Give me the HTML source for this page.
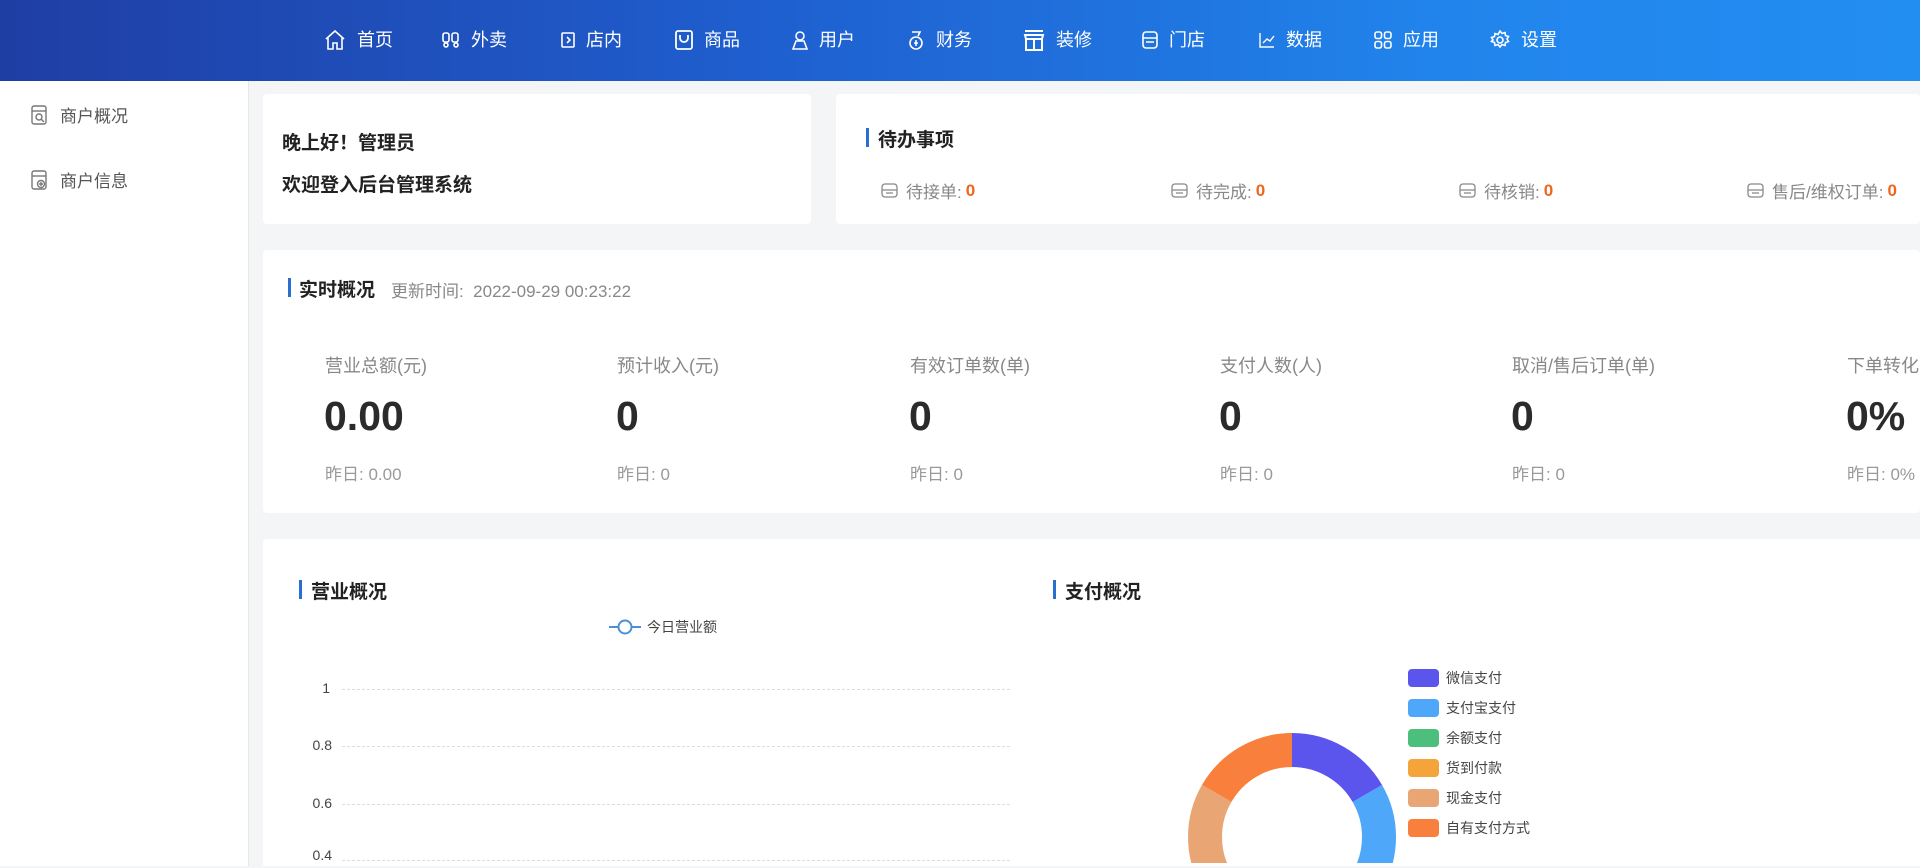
<!DOCTYPE html>
<html><head><meta charset="utf-8"><style>
*{margin:0;padding:0;box-sizing:border-box}
html,body{width:1920px;height:868px;overflow:hidden}
body{background:#f4f5f7;font-family:"Liberation Sans","Noto Sans CJK SC",sans-serif;color:#333}
#w{position:relative;width:1920px;height:868px;overflow:hidden}
.a{position:absolute;white-space:nowrap}
.hdr{position:absolute;left:0;top:0;width:1920px;height:81px;background:linear-gradient(90deg,#1f3ea4 0%,#1f5fcf 40%,#2184ec 75%,#238ef2 100%)}
.nav{position:absolute;top:28px;color:#fff;font-size:18px;line-height:24px;display:flex;align-items:center}
.nav svg{margin-right:10px}
.side{position:absolute;left:0;top:81px;width:249px;height:785px;background:#fff;border-right:1px solid #e8e8e8}
.sideb{position:absolute;left:0;top:866px;width:249px;height:2px;background:#fff;border-right:1px solid #e8e8e8}
.si{position:absolute;left:30px;font-size:17px;color:#555;display:flex;align-items:center}
.si svg{margin-right:12px}
.card{position:absolute;background:#fff;border-radius:4px}
.t{font-weight:bold;font-size:19px;color:#222}
.bar{position:absolute;width:3px;height:19px;background:#2a6fd0}
.todo{position:absolute;top:178px;font-size:17px;color:#888;display:flex;align-items:center}
.todo svg{margin-right:7px}
.todo b{color:#f0641e;margin-left:4px}
.lbl{font-size:18px;color:#888;top:352px}
.val{font-size:41px;font-weight:bold;color:#2b2b2b;top:393px}
.yd{font-size:17px;color:#999;top:460px}
.yl{font-size:14px;line-height:16px;color:#444;text-align:right;width:30px}
.gl{position:absolute;left:79px;width:668px;border-top:1px dashed #ddd}
.lg{position:absolute;left:1145px;width:31px;height:18px;border-radius:4px}
.lt{position:absolute;left:1183px;font-size:14px;color:#444}
</style></head><body><div id="w">
<div class="hdr"></div>
<div class="nav" style="left:323px"><svg width="24" height="24" viewBox="0 0 24 24" fill="none" stroke="#fff" stroke-width="1.6"><path d="M3 11L12 3l9 8M5 10v11h5v-6h4v6h5V10"/></svg>首页</div>
<div class="nav" style="left:441px"><svg width="20" height="20" viewBox="0 0 20 20" fill="none" stroke="#fff" stroke-width="1.6"><rect x="2" y="3" width="6" height="9" rx="2"/><rect x="11" y="3" width="6" height="9" rx="2"/><circle cx="5" cy="15" r="2"/><circle cx="15" cy="15" r="2"/></svg>外卖</div>
<div class="nav" style="left:560px"><svg width="16" height="18" viewBox="0 0 16 18" fill="none" stroke="#fff" stroke-width="1.6"><rect x="2" y="2" width="12" height="14" rx="1"/><path d="M7 6l3 3-3 3"/></svg>店内</div>
<div class="nav" style="left:674px"><svg width="20" height="22" viewBox="0 0 20 22" fill="none" stroke="#fff" stroke-width="1.8"><rect x="2" y="2" width="16" height="18" rx="2"/><path d="M6 6v3a4 4 0 0 0 8 0V6"/></svg>商品</div>
<div class="nav" style="left:791px"><svg width="18" height="22" viewBox="0 0 18 22" fill="none" stroke="#fff" stroke-width="1.6"><circle cx="9" cy="7" r="4"/><path d="M2 20l3-8h8l3 8z"/></svg>用户</div>
<div class="nav" style="left:906px"><svg width="20" height="22" viewBox="0 0 20 22" fill="none" stroke="#fff" stroke-width="1.6"><path d="M6 3h8l-2 4"/><circle cx="10" cy="14" r="6"/><path d="M8 14h4M10 11v6"/></svg>财务</div>
<div class="nav" style="left:1022px"><svg width="24" height="24" viewBox="0 0 24 24" fill="none" stroke="#fff" stroke-width="2"><path d="M3 3h18M3 7h18l-1 4H4z"/><rect x="4" y="11" width="16" height="11"/><path d="M12 11v11"/></svg>装修</div>
<div class="nav" style="left:1141px"><svg width="18" height="20" viewBox="0 0 18 20" fill="none" stroke="#fff" stroke-width="1.6"><rect x="2" y="2" width="14" height="16" rx="3"/><path d="M2 8h14M5 12h8"/></svg>门店</div>
<div class="nav" style="left:1258px"><svg width="18" height="18" viewBox="0 0 18 18" fill="none" stroke="#fff" stroke-width="1.4"><path d="M2 2v14h14M5 12l4-4 3 2 4-5"/></svg>数据</div>
<div class="nav" style="left:1373px"><svg width="20" height="20" viewBox="0 0 20 20" fill="none" stroke="#fff" stroke-width="1.6"><rect x="2" y="2" width="6.5" height="6.5" rx="2"/><rect x="11.5" y="2" width="6.5" height="6.5" rx="2"/><rect x="2" y="11.5" width="6.5" height="6.5" rx="2"/><rect x="11.5" y="11.5" width="6.5" height="6.5" rx="2"/></svg>应用</div>
<div class="nav" style="left:1489px"><svg width="22" height="22" viewBox="0 0 22 22" fill="none" stroke="#fff" stroke-width="1.6"><circle cx="11" cy="11" r="3"/><path d="M11 2l2 2.5 3-1 .5 3 3 1-1.5 2.5 1.5 2.5-3 1-.5 3-3-1-2 2.5-2-2.5-3 1-.5-3-3-1L4 11 2.5 8.5l3-1 .5-3 3 1z"/></svg>设置</div>

<div class="side">
<div class="si" style="top:21px"><svg width="18" height="22" viewBox="0 0 18 22" fill="none" stroke="#777" stroke-width="1.4"><rect x="2" y="2" width="14" height="18" rx="2"/><path d="M2 7h14"/><circle cx="9" cy="13" r="3"/><path d="M11 15l3 3"/></svg>商户概况</div>
<div class="si" style="top:86px"><svg width="18" height="22" viewBox="0 0 18 22" fill="none" stroke="#777" stroke-width="1.4"><rect x="2" y="2" width="14" height="18" rx="2"/><path d="M2 7h14"/><circle cx="11" cy="15" r="3.5"/><path d="M11 13v4M9 15h4"/></svg>商户信息</div>
</div>

<div class="card" style="left:263px;top:94px;width:548px;height:130px"></div>
<div class="a t" style="left:282px;top:128px">晚上好！管理员</div>
<div class="a t" style="left:282px;top:170px">欢迎登入后台管理系统</div>

<div class="card" style="left:836px;top:94px;width:1084px;height:130px"></div>
<div class="bar" style="left:866px;top:128px"></div>
<div class="a t" style="left:878px;top:125px">待办事项</div>
<div class="todo" style="left:880px">
<svg width="19" height="19" viewBox="0 0 19 19" fill="none" stroke="#888" stroke-width="1.3"><rect x="2" y="3" width="15" height="13" rx="3"/><path d="M2 9h15M6 12h7"/></svg>待接单:<b>0</b></div>
<div class="todo" style="left:1170px"><svg width="19" height="19" viewBox="0 0 19 19" fill="none" stroke="#888" stroke-width="1.3"><rect x="2" y="3" width="15" height="13" rx="3"/><path d="M2 9h15M6 12h7"/></svg>待完成:<b>0</b></div>
<div class="todo" style="left:1458px"><svg width="19" height="19" viewBox="0 0 19 19" fill="none" stroke="#888" stroke-width="1.3"><rect x="2" y="3" width="15" height="13" rx="3"/><path d="M2 9h15M6 12h7"/></svg>待核销:<b>0</b></div>
<div class="todo" style="left:1746px"><svg width="19" height="19" viewBox="0 0 19 19" fill="none" stroke="#888" stroke-width="1.3"><rect x="2" y="3" width="15" height="13" rx="3"/><path d="M2 9h15M6 12h7"/></svg>售后/维权订单:<b>0</b></div>

<div class="card" style="left:263px;top:250px;width:1657px;height:263px"></div>
<div class="bar" style="left:288px;top:278px"></div>
<div class="a t" style="left:299px;top:275px">实时概况</div>
<div class="a" style="left:391px;top:277px;font-size:17px;color:#888">更新时间:&nbsp; 2022-09-29 00:23:22</div>
<div class="a lbl" style="left:325px">营业总额(元)</div><div class="a val" style="left:324px">0.00</div><div class="a yd" style="left:325px">昨日: 0.00</div>
<div class="a lbl" style="left:617px">预计收入(元)</div><div class="a val" style="left:616px">0</div><div class="a yd" style="left:617px">昨日: 0</div>
<div class="a lbl" style="left:910px">有效订单数(单)</div><div class="a val" style="left:909px">0</div><div class="a yd" style="left:910px">昨日: 0</div>
<div class="a lbl" style="left:1220px">支付人数(人)</div><div class="a val" style="left:1219px">0</div><div class="a yd" style="left:1220px">昨日: 0</div>
<div class="a lbl" style="left:1512px">取消/售后订单(单)</div><div class="a val" style="left:1511px">0</div><div class="a yd" style="left:1512px">昨日: 0</div>
<div class="a lbl" style="left:1847px">下单转化</div><div class="a val" style="left:1846px">0%</div><div class="a yd" style="left:1847px">昨日: 0%</div>

<div class="card" style="left:263px;top:539px;width:1657px;height:327px;overflow:hidden;border-radius:4px 0 0 0">
<div class="bar" style="left:36px;top:41px"></div>
<div class="a t" style="left:48px;top:38px">营业概况</div>
<div class="bar" style="left:790px;top:41px"></div>
<div class="a t" style="left:802px;top:38px">支付概况</div>
<svg class="a" style="left:344px;top:78px" width="36" height="20"><path d="M2 10h32" stroke="#4a8fd8" stroke-width="2"/><circle cx="18" cy="10" r="6.5" fill="#fff" stroke="#4a8fd8" stroke-width="2"/></svg>
<div class="a" style="left:384px;top:78px;font-size:14px;color:#444">今日营业额</div>
<div class="a yl" style="left:37px;top:141px">1</div><div class="gl" style="top:150px"></div>
<div class="a yl" style="left:39px;top:198px">0.8</div><div class="gl" style="top:207px"></div>
<div class="a yl" style="left:39px;top:256px">0.6</div><div class="gl" style="top:265px"></div>
<div class="a yl" style="left:39px;top:308px">0.4</div><div class="gl" style="top:321px"></div>
<svg class="a" style="left:925px;top:194px" width="208" height="130" viewBox="0 0 208 130">
<g fill="none" stroke-width="34" transform="rotate(-90 104 104)">
<circle cx="104" cy="104" r="87" stroke="#5b55ee" stroke-dasharray="91.1 455.5" stroke-dashoffset="0"/>
<circle cx="104" cy="104" r="87" stroke="#4ea7f8" stroke-dasharray="91.1 455.5" stroke-dashoffset="-91.1"/>
<circle cx="104" cy="104" r="87" stroke="#4bbf7b" stroke-dasharray="91.1 455.5" stroke-dashoffset="-182.2"/>
<circle cx="104" cy="104" r="87" stroke="#f5a43a" stroke-dasharray="91.1 455.5" stroke-dashoffset="-273.3"/>
<circle cx="104" cy="104" r="87" stroke="#e9a574" stroke-dasharray="91.1 455.5" stroke-dashoffset="-364.4"/>
<circle cx="104" cy="104" r="87" stroke="#f97f3c" stroke-dasharray="91.1 455.5" stroke-dashoffset="-455.5"/>
</g></svg>
<div class="lg" style="top:130px;background:#5b55ee"></div><div class="lt" style="top:129px">微信支付</div>
<div class="lg" style="top:160px;background:#4ea7f8"></div><div class="lt" style="top:159px">支付宝支付</div>
<div class="lg" style="top:190px;background:#4bbf7b"></div><div class="lt" style="top:189px">余额支付</div>
<div class="lg" style="top:220px;background:#f5a43a"></div><div class="lt" style="top:219px">货到付款</div>
<div class="lg" style="top:250px;background:#e9a574"></div><div class="lt" style="top:249px">现金支付</div>
<div class="lg" style="top:280px;background:#f97f3c"></div><div class="lt" style="top:279px">自有支付方式</div>
</div>
</div></body></html>
